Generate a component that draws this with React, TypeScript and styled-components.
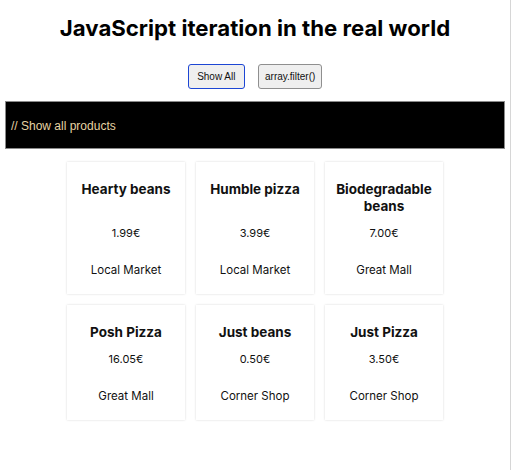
import React from "react";
import styled, { createGlobalStyle } from "styled-components";

const Global = createGlobalStyle`
  html, body { margin: 0; padding: 0; background: #fff; }
  body { font-family: Inter, "Noto Sans", sans-serif; color: #111; }
`;

const Page = styled.div`
  width: 510px;
  min-height: 470px;
  border-right: 1px solid #d6d6d6;
  box-sizing: content-box;
  display: flex;
  flex-direction: column;
  align-items: stretch;
`;

const Title = styled.h1`
  margin: 14px 0 0;
  font-size: 22.2px;
  line-height: 28px;
  font-weight: 700;
  text-align: center;
  color: #000;
`;

const Toolbar = styled.div`
  display: flex;
  justify-content: center;
  gap: 13px;
  margin-top: 22px;
`;

const Button = styled.button<{ $active?: boolean }>`
  height: 25px;
  padding: ${(p) => (p.$active ? "0 8.5px" : "0 6px")};
  font-family: "Liberation Sans", Arial, sans-serif;
  font-size: 10px;
  color: #111;
  background: #efefef;
  border: ${(p) => (p.$active ? "1.5px solid #1d46d4" : "1px solid #8f8f8f")};
  border-radius: 3px;
  box-sizing: border-box;
`;

const Bar = styled.div`
  margin: 12px 5px 0;
  height: 48px;
  background: #000;
  border: 1px solid #8a8a8a;
  box-sizing: border-box;
  display: flex;
  align-items: center;
  padding: 2px 0 0 5px;
  color: #e6d3a3;
  font-family: "Liberation Sans", Arial, sans-serif;
  font-size: 12px;
`;

const Grid = styled.div`
  display: grid;
  grid-template-columns: repeat(3, 118px);
  column-gap: 11px;
  row-gap: 11px;
  justify-content: center;
  margin-top: 13px;
`;

const Card = styled.div`
  display: flex;
  flex-direction: column;
  align-items: center;
  text-align: center;
  padding: 19px 8px 17px;
  box-shadow: 0 0 2px rgba(0, 0, 0, 0.16);
  background: #fff;
`;

const Name = styled.h2`
  flex: 1;
  margin: 0 0 11px;
  font-size: 13.5px;
  line-height: 17px;
  font-weight: 700;
  color: #111;
`;

const Price = styled.div`
  font-size: 11px;
  line-height: 14px;
  margin-bottom: 23px;
`;

const Store = styled.div`
  font-size: 11.5px;
  line-height: 14px;
`;

const products = [
  { name: "Hearty beans", price: "1.99€", store: "Local Market" },
  { name: "Humble pizza", price: "3.99€", store: "Local Market" },
  { name: "Biodegradable beans", price: "7.00€", store: "Great Mall" },
  { name: "Posh Pizza", price: "16.05€", store: "Great Mall" },
  { name: "Just beans", price: "0.50€", store: "Corner Shop" },
  { name: "Just Pizza", price: "3.50€", store: "Corner Shop" },
];

export default function App() {
  return (
    <Page>
      <Global />
      <Title>JavaScript iteration in the real world</Title>
      <Toolbar>
        <Button $active>Show All</Button>
        <Button>array.filter()</Button>
      </Toolbar>
      <Bar>// Show all products</Bar>
      <Grid>
        {products.map((p) => (
          <Card key={p.name}>
            <Name>{p.name}</Name>
            <Price>{p.price}</Price>
            <Store>{p.store}</Store>
          </Card>
        ))}
      </Grid>
    </Page>
  );
}
